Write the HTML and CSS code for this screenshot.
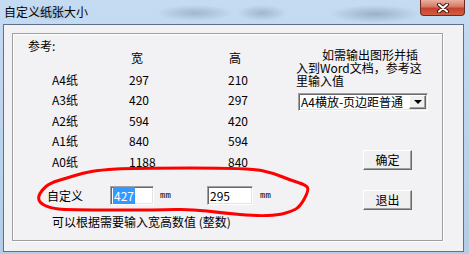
FILE: index.html
```html
<!DOCTYPE html>
<html lang="zh-CN">
<head>
  <meta charset="UTF-8">
  <title>自定义纸张大小</title>
  <link rel="stylesheet" href="styles.css">
</head>
<body>

  <div class="window">

    <!-- title bar -->
    <div class="titlebar">
      <span class="title">自定义纸张大小</span>
      <div class="close">
        <svg width="14" height="10" viewBox="0 0 14 10">
          <path d="M3 1.5 L11 8.5 M11 1.5 L3 8.5" stroke="#3d1510" stroke-width="4" stroke-linecap="round"/>
          <path d="M3 1.5 L11 8.5 M11 1.5 L3 8.5" stroke="#fff" stroke-width="2" stroke-linecap="round"/>
        </svg>
      </div>
    </div>

    <div class="client">
      <div class="group">

        <div class="left">
          <div class="ref">参考:</div>
          <div class="row head"><span class="c1"></span><span class="c2">宽</span><span class="c3">高</span></div>
          <div class="rows">
            <div class="row"><span class="c1">A4纸</span><span class="c2">297</span><span class="c3">210</span></div>
            <div class="row"><span class="c1">A3纸</span><span class="c2">420</span><span class="c3">297</span></div>
            <div class="row"><span class="c1">A2纸</span><span class="c2">594</span><span class="c3">420</span></div>
            <div class="row"><span class="c1">A1纸</span><span class="c2">840</span><span class="c3">594</span></div>
            <div class="row"><span class="c1">A0纸</span><span class="c2">1188</span><span class="c3">840</span></div>
          </div>

          <div class="custom">
            <span class="custom-label">自定义</span>
            <div class="field w1"><span class="sel">427</span></div>
            <span class="unit">mm</span>
            <div class="field w2">295</div>
            <span class="unit last">mm</span>
          </div>
          <div class="hint">可以根据需要输入宽高数值 (整数)</div>
        </div>

        <div class="right">
          <p class="note">如需输出图形并插<br>入到Word文档，参考这<br>里输入值</p>
          <div class="combo">
            <span class="combo-text">A4横放-页边距普通</span>
            <span class="combo-btn"><span class="arrow"></span></span>
          </div>
          <div class="btn ok">确定</div>
          <div class="btn quit">退出</div>
        </div>

        <!-- red hand drawn mark, page coordinates -->
        <svg class="mark" width="340" height="230" viewBox="12 33 340 230">
          <path d="M307.5 187.5 Q309 190 304.5 198.5 Q300 207 295 209.5 Q290 212 284 213.5 Q278 215 267.5 215.5 Q257 216 240 214.5 Q223 213 206.5 211 Q190 209 175 209.5 Q160 210 113.5 210 Q67 210 58.5 209 Q50 208 45 205.5 Q40 203 39 200 Q38 197 40 193.5 Q42 190 46 186.5 Q50 183 58.5 180.5 Q67 178 75 175.5 Q83 173 91.5 171.5 Q100 170 116.5 169 Q133 168 191.5 168 Q250 168 261.5 170.5 Q273 173 281.5 176.5 Q290 180 298 182.5 Q306 185 307.5 187.5 Z" fill="none" stroke="#ff0000" stroke-width="3" stroke-linejoin="round"/>
        </svg>

      </div>
    </div>

  </div>

</body>
</html>
```

FILE: styles.css
```css
body {
  margin: 0;
  font-family: "Noto Sans CJK SC", sans-serif;
  font-size: 12px;
  color: #000;
}

.window {
  width: 469px;
  height: 254px;
  display: flex;
  flex-direction: column;
  background:
    radial-gradient(ellipse 22px 8px at 52px 13px, rgba(80, 100, 125, .35), transparent),
    radial-gradient(ellipse 38px 8px at 195px 13px, rgba(80, 100, 125, .3), transparent),
    radial-gradient(ellipse 25px 8px at 262px 13px, rgba(80, 100, 125, .3), transparent),
    radial-gradient(ellipse 45px 9px at 375px 14px, rgba(80, 100, 125, .35), transparent),
    linear-gradient(#c4dbf2, #b4cce6);
}

.titlebar {
  height: 24px;
  display: flex;
  justify-content: space-between;
  align-items: flex-start;
}

.title {
  padding-left: 4px;
  line-height: 24px;
}

.close {
  width: 45px;
  height: 16px;
  margin-right: 4px;
  box-sizing: border-box;
  border: 1px solid #6b2a22;
  border-top: none;
  border-radius: 0 0 4px 4px;
  background: linear-gradient(#eab0a2, #d97763 45%, #c3432e 55%, #d65c41);
  display: flex;
  align-items: center;
  justify-content: center;
}

.client {
  margin-left: 3px;
  width: 461px;
  height: 228px;
  box-sizing: border-box;
  border: 1px solid #5f7186;
  background: #f2f1f4;
  padding: 8px 0 0 8px;
}

.group {
  position: relative;
  width: 431px;
  height: 208px;
  box-sizing: border-box;
  border: 1px solid #a0a0a0;
  box-shadow: inset 1px 1px #fff, 1px 1px #fff;
  display: flex;
}

.left {
  width: 283px;
  flex: none;
  padding-top: 6px;
}

.ref {
  padding-left: 15px;
  height: 12px;
  line-height: 12px;
}

.row {
  display: flex;
  padding-left: 39px;
  height: 20.5px;
  line-height: 20.5px;
}

.row.head {
  height: 12px;
  line-height: 12px;
}

.rows {
  margin-top: 5.75px;
}

.c1 { width: 77px; }
.c2 { width: 99px; }
.head .c2 { padding-left: 2px; width: 97px; }
.head .c3 { padding-left: 1px; }

.custom {
  margin-top: 13.75px;
  height: 19px;
  display: flex;
  align-items: center;
  padding-left: 34px;
}

.custom > * {
  flex: none;
}

.custom-label {
  width: 63px;
}

.field {
  height: 19px;
  box-sizing: border-box;
  border: 1px solid;
  border-color: #a0a0a0 #fff #fff #a0a0a0;
  box-shadow: inset 1px 1px #696969, inset -1px -1px #e3e3e3;
  background: #fff;
  padding: 2px 0 0 2px;
  line-height: 14px;
}

.w1 { width: 44px; }
.w2 { width: 46px; }

.sel {
  background: #3399ff;
  color: #fff;
  padding: 0 1px;
}

.unit {
  font-family: "Liberation Mono", monospace;
  font-size: 9px;
  margin-left: 6px;
  width: 47px;
}

.unit.last {
  margin-left: 7px;
}

.hint {
  margin-top: 10px;
  height: 14px;
  line-height: 14px;
  padding-left: 39px;
}

.right {
  flex: 1;
  padding-top: 13.5px;
}

.note {
  margin: 0;
  line-height: 13px;
  text-indent: 26px;
  white-space: nowrap;
}

.combo {
  margin: 6.5px 0 0 2px;
  width: 130px;
  height: 18px;
  box-sizing: border-box;
  border: 1px solid;
  border-color: #a0a0a0 #fff #fff #a0a0a0;
  box-shadow: inset 1px 1px #696969, inset -1px -1px #e3e3e3;
  background: #fff;
  display: flex;
  align-items: center;
}

.combo-text {
  flex: 1;
  padding-left: 2px;
  line-height: 14px;
}

.combo-btn {
  width: 17px;
  height: 14px;
  box-sizing: border-box;
  margin-right: 1px;
  background: #f0f0f0;
  border: 1px solid;
  border-color: #fff #696969 #696969 #fff;
  box-shadow: inset -1px -1px #a0a0a0;
  display: flex;
  align-items: center;
  justify-content: center;
}

.arrow {
  width: 0;
  height: 0;
  border-left: 4px solid transparent;
  border-right: 4px solid transparent;
  border-top: 4px solid #000;
}

.btn {
  margin-left: 67px;
  width: 49px;
  height: 20px;
  box-sizing: border-box;
  background: #f0f0f0;
  border: 1px solid;
  border-color: #fff #696969 #696969 #fff;
  box-shadow: inset -1px -1px #a0a0a0;
  text-align: center;
  line-height: 18px;
}

.btn.ok { margin-top: 39px; }
.btn.quit { margin-top: 20px; }

.mark {
  position: absolute;
  left: -1px;
  top: -1px;
  pointer-events: none;
}
```
